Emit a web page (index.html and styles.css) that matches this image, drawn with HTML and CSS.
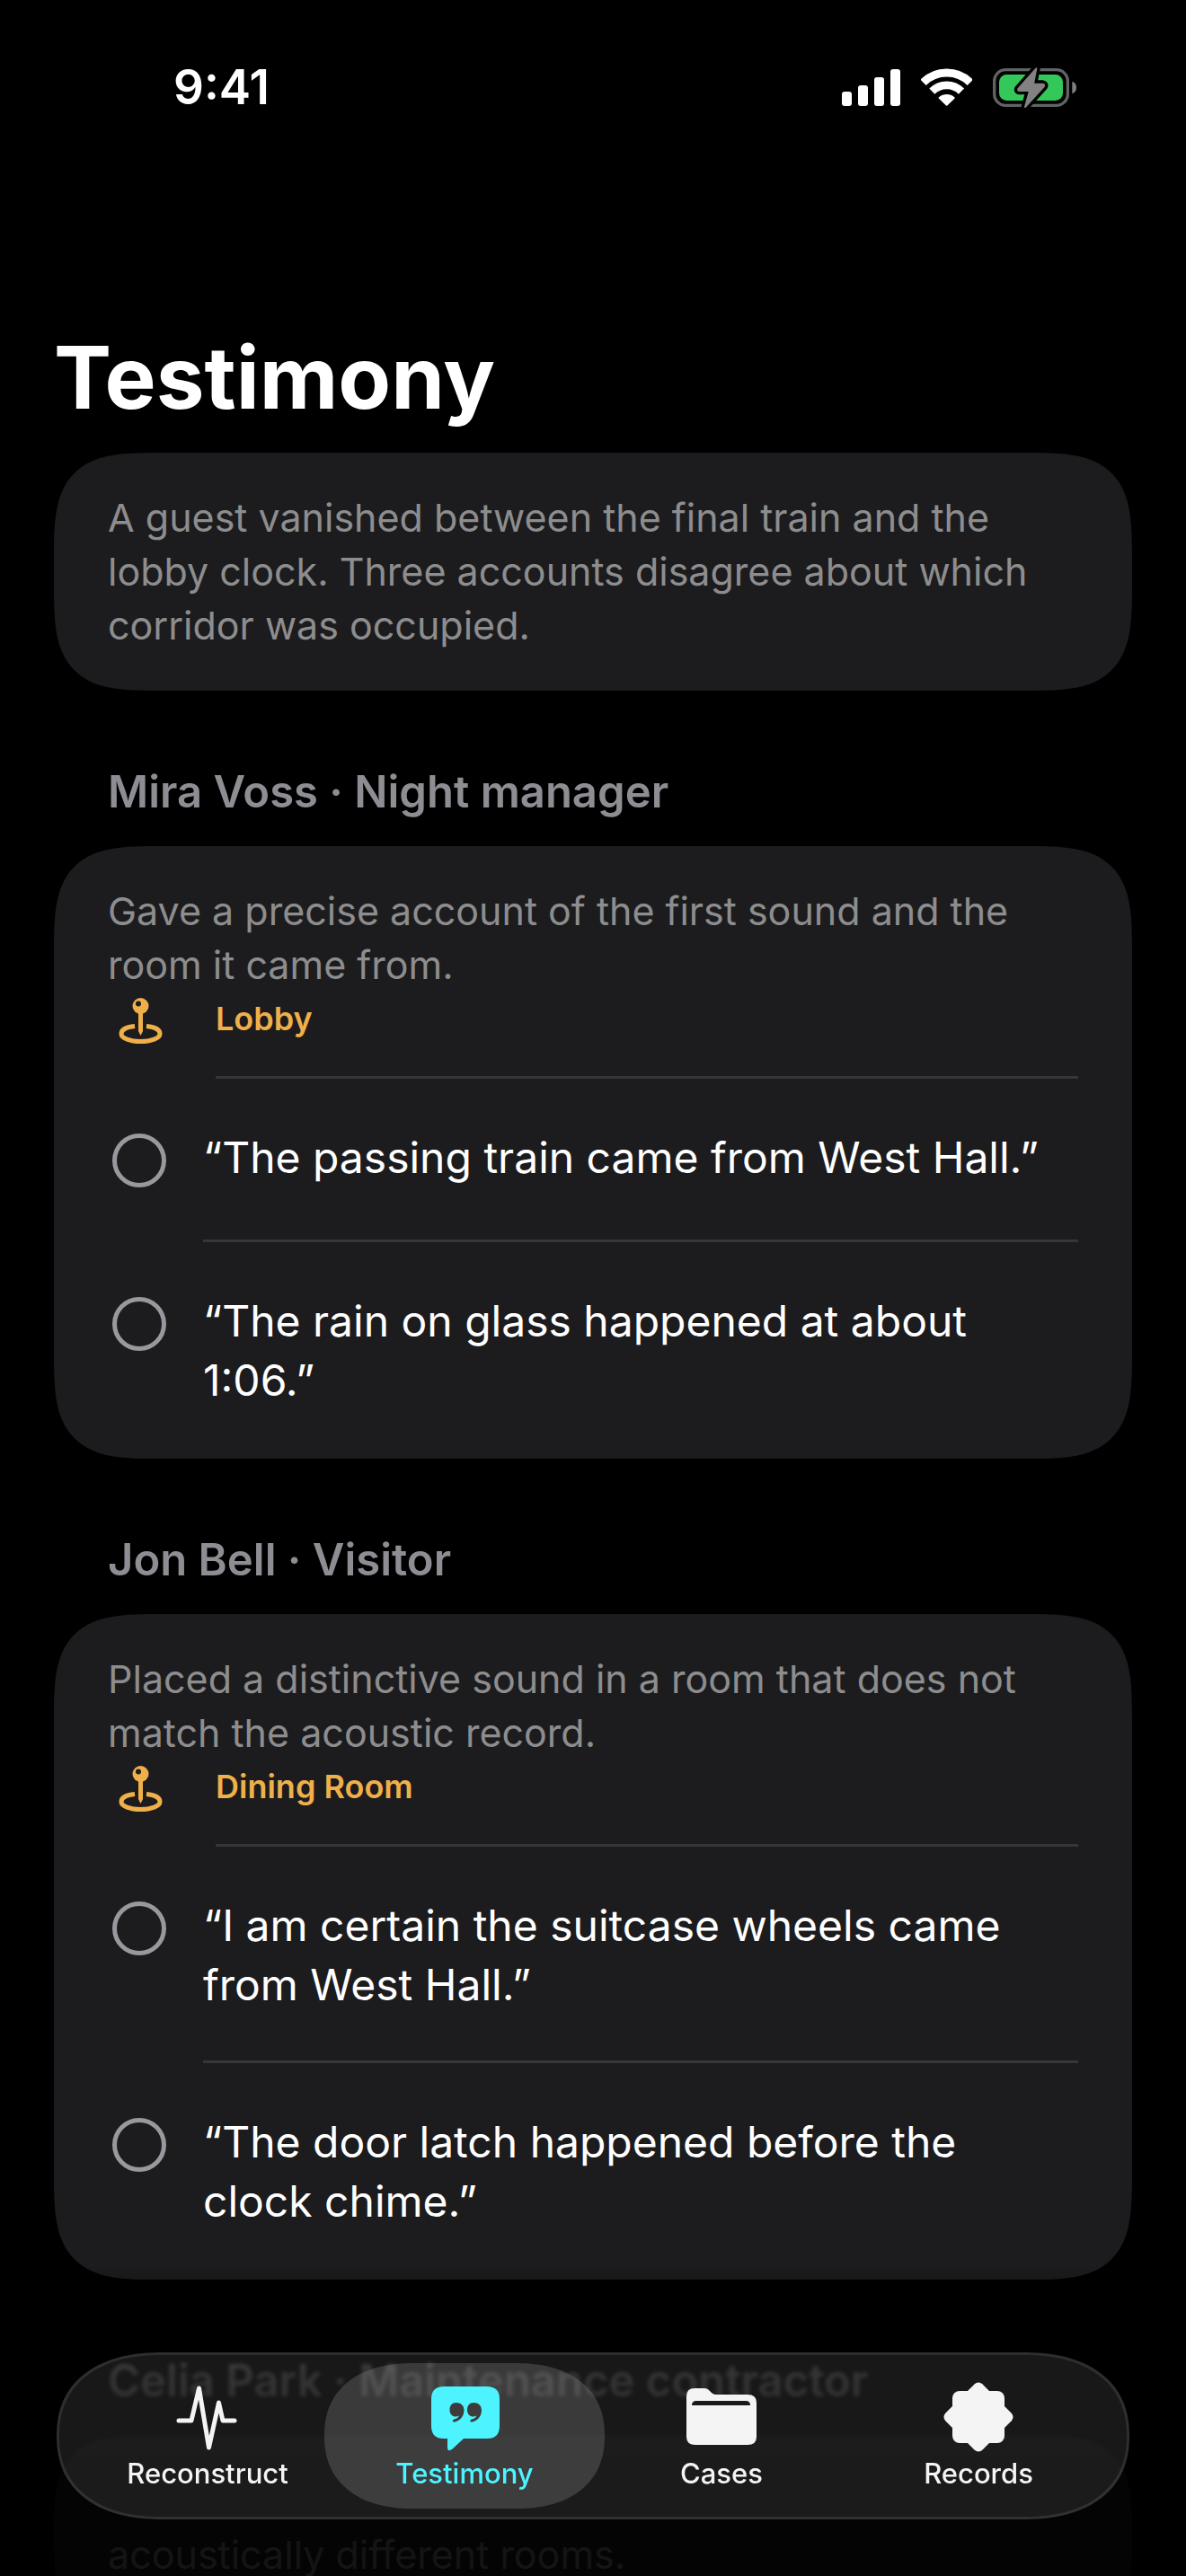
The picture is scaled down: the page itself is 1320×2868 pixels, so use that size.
FILE: index.html
```html
<!DOCTYPE html>
<html lang="en">
<head>
  <meta charset="UTF-8">
  <meta name="viewport" content="width=device-width, initial-scale=1.0">
  <title>Testimony</title>
  <link rel="stylesheet" href="styles.css">
</head>
<body>
  <div class="screen">
    <header class="status-bar">
      <span class="time">9:41</span>
      <div class="status-icons">
        <svg width="65" height="42" viewBox="111 75 195 126" fill="#fff" aria-hidden="true">
          <rect x="111" y="153" width="33" height="48" rx="9"/>
          <rect x="165" y="132" width="33" height="69" rx="9"/>
          <rect x="219" y="105" width="33" height="96" rx="9"/>
          <rect x="273" y="78" width="33" height="123" rx="9"/>
        </svg>
        <svg width="57" height="42" viewBox="374 75 171 126" fill="none" stroke="#fff" aria-hidden="true">
          <path d="M381.5 122.5A111 111 0 0 1 538.5 122.5" stroke-width="27"/>
          <path d="M411 152A69 69 0 0 1 509 152" stroke-width="26"/>
          <path d="M460 197L436 174A36 36 0 0 1 484 174Z" fill="#fff" stroke-width="6" stroke-linejoin="round"/>
        </svg>
        <svg width="94" height="45" viewBox="615 72 282 135" aria-hidden="true">
          <rect x="620" y="80" width="245" height="119" rx="38" fill="none" stroke="#636363" stroke-width="10"/>
          <rect x="636" y="96" width="213" height="87" rx="25" fill="#34c759"/>
          <path d="M880 119Q894 124 894 139.500T880 160Z" fill="#808080"/>
          <path d="M760 76L700 144Q698 150 704 150H738L723 204L786 135Q788 129 782 128H750Z" fill="#000" stroke="#000" stroke-width="26" stroke-linejoin="round"/>
          <path d="M760 76L700 144Q698 150 704 150H738L723 204L786 135Q788 129 782 128H750Z" fill="#828282" stroke="#828282" stroke-width="6" stroke-linejoin="round"/>
        </svg>
      </div>
    </header>

    <main>
      <h1>Testimony</h1>

      <section class="card summary">
        <p class="note">A guest vanished between the final train and the lobby clock. Three accounts disagree about which corridor was occupied.</p>
      </section>

      <h2>Mira Voss · Night manager</h2>
      <section class="card">
        <div class="witness">
          <p class="note">Gave a precise account of the first sound and the room it came from.</p>
          <div class="place">
            <svg class="pin" viewBox="0 0 72 60" aria-hidden="true">
              <path d="M30 34.500C20 35.500 15 39 15 43C15 48 25 51.500 36.500 51.500S58 48 58 43C58 39 53 35.500 43 34.500" transform="translate(0 4)" fill="none" stroke="#efb04a" stroke-width="5"/>
              <path d="M34 22H39V44L36.500 49L34 44Z" fill="#efb04a"/>
              <circle cx="36.500" cy="16" r="9" fill="#efb04a"/>
              <circle cx="34" cy="13.500" r="3" fill="#1c1c1e"/>
            </svg>
            <span class="place-name">Lobby</span>
          </div>
        </div>
        <label class="claim">
          <input type="checkbox">
          <span class="claim-text">“The passing train came from West Hall.”</span>
        </label>
        <label class="claim">
          <input type="checkbox">
          <span class="claim-text">“The rain on glass happened at about 1:06.”</span>
        </label>
      </section>

      <h2>Jon Bell · Visitor</h2>
      <section class="card">
        <div class="witness">
          <p class="note">Placed a distinctive sound in a room that does not match the acoustic record.</p>
          <div class="place">
            <svg class="pin" viewBox="0 0 72 60" aria-hidden="true">
              <path d="M30 34.500C20 35.500 15 39 15 43C15 48 25 51.500 36.500 51.500S58 48 58 43C58 39 53 35.500 43 34.500" transform="translate(0 4)" fill="none" stroke="#efb04a" stroke-width="5"/>
              <path d="M34 22H39V44L36.500 49L34 44Z" fill="#efb04a"/>
              <circle cx="36.500" cy="16" r="9" fill="#efb04a"/>
              <circle cx="34" cy="13.500" r="3" fill="#1c1c1e"/>
            </svg>
            <span class="place-name">Dining Room</span>
          </div>
        </div>
        <label class="claim">
          <input type="checkbox">
          <span class="claim-text">“I am certain the suitcase wheels came from West Hall.”</span>
        </label>
        <label class="claim">
          <input type="checkbox">
          <span class="claim-text">“The door latch happened before the clock chime.”</span>
        </label>
      </section>

      <h2>Celia Park · Maintenance contractor</h2>
      <section class="card next">
        <p class="note">acoustically different rooms.</p>
      </section>
    </main>

    <div class="edge-fade"></div>

    <nav class="tab-bar">
      <a class="tab" href="#reconstruct">
        <svg width="84" height="78" viewBox="0 0 84 78" aria-hidden="true">
          <path d="M10 43H24L32.500 7L43.500 73L54.500 23L59 43H72" fill="none" stroke="currentColor" stroke-width="5" stroke-linecap="round" stroke-linejoin="round"/>
        </svg>
        <span>Reconstruct</span>
      </a>
      <a class="tab active" href="#testimony">
        <svg width="84" height="78" viewBox="0 0 84 78" aria-hidden="true">
          <path d="M19 5H67Q81 5 81 19V49Q81 63 67 63H41L28 75Q23 78 23 73V63H19Q5 63 5 49V19Q5 5 19 5Z" fill="currentColor"/>
          <g fill="#3c3c3c">
            <path d="M33 23C28 23 25.500 26.500 25.500 31C25.500 36 29 39 33 38.500L36 37.500C35 40 33 41 30.500 41.500C28 42.500 28.500 45 31 44.500C38 43 41.500 37 41.500 31.500C41.500 26.500 38 23 33 23Z"/>
            <path d="M52.500 23C47.500 23 45 26.500 45 31C45 36 48.500 39 52.500 38.500L55.500 37.500C54.500 40 52.500 41 50 41.500C47.500 42.500 48 45 50.500 44.500C57.500 43 61 37 61 31.500C61 26.500 57.500 23 52.500 23Z"/>
          </g>
        </svg>
        <span>Testimony</span>
      </a>
      <a class="tab" href="#cases">
        <svg width="84" height="78" viewBox="0 0 84 78" aria-hidden="true">
          <path d="M12 7H23Q26 7 28 9L31 12Q33 14 36 14H71Q81 14 81 23V61Q81 70 71 70H13Q3 70 3 61V16Q3 7 12 7Z" fill="currentColor"/>
          <path d="M9 26Q9 21 14 21H69Q74 21 74 26Z" fill="#1a1a1a"/>
        </svg>
        <span>Cases</span>
      </a>
      <a class="tab" href="#records">
        <svg width="84" height="78" viewBox="0 0 84 78" aria-hidden="true">
          <g fill="currentColor" transform="translate(42 39)">
            <rect x="-29" y="-29" width="58" height="58" rx="8"/>
            <rect x="-29" y="-29" width="58" height="58" rx="6" transform="rotate(45)"/>
          </g>
        </svg>
        <span>Records</span>
      </a>
    </nav>
  </div>
</body>
</html>
```
FILE: styles.css
```css
* {
  box-sizing: border-box;
}
body {
  margin: 0;
  background: #000;
  color: #fff;
  font-family: Inter, "Liberation Sans", sans-serif;
}
.screen {
  position: relative;
  height: 100vh;
  overflow: hidden;
}

/* status bar */
.status-bar {
  display: flex;
  align-items: center;
  justify-content: space-between;
  height: 194px;
  padding: 0 121px 0 193px;
}
.time {
  font-size: 53px;
  font-weight: 600;
  line-height: 60px;
}
.status-icons {
  display: flex;
  align-items: center;
  gap: 23px;
}

/* content */
main {
  padding: 166px 60px 0;
}
h1 {
  margin: 0 0 24px;
  font-size: 96px;
  font-weight: 700;
  line-height: 120px;
}
h2 {
  margin: 80px 0 0;
  padding: 0 60px 27px;
  color: #8d8d93;
  font-size: 49px;
  font-weight: 600;
  line-height: 66px;
}
.card {
  background: #1c1c1e;
  border-radius: 84px;
}
.summary {
  padding: 42px 60px 43px;
}
.note {
  margin: 0;
  color: #8d8d8e;
  font-size: 43px;
  line-height: 60px;
}
.witness {
  padding: 42px 60px 0;
}
.place {
  display: flex;
  gap: 48px;
}
.pin {
  width: 72px;
  height: 60px;
}
.place-name {
  flex: 1;
  padding-bottom: 34px;
  border-bottom: 3px solid #363638;
  color: #efb04a;
  font-size: 36px;
  font-weight: 600;
  line-height: 60px;
}
.claim {
  display: flex;
  align-items: flex-start;
  gap: 41px;
  padding: 0 60px 0 65px;
}
.claim input {
  appearance: none;
  flex: none;
  width: 60px;
  height: 60px;
  margin: 61px 0 0;
  border: 5px solid #98989e;
  border-radius: 50%;
}
.claim input:checked {
  background: #4df4ff;
}
.claim-text {
  flex: 1;
  min-height: 182px;
  padding: 55px 24px 51px 0;
  border-bottom: 3px solid #363638;
  font-size: 48px;
  line-height: 66px;
}
.claim:last-child .claim-text {
  border-color: transparent;
}
.next {
  padding: 103px 60px 60px;
}

/* tab bar floating over the list */
.edge-fade {
  position: absolute;
  right: 0;
  bottom: 0;
  left: 0;
  height: 348px;
  background: linear-gradient(transparent, rgba(0, 0, 0, 0.77) 120px, rgba(0, 0, 0, 0.86) 240px);
}
.tab-bar {
  position: absolute;
  right: 63px;
  bottom: 63px;
  left: 63px;
  display: flex;
  padding: 9px 22px;
  border: 3px solid rgba(255, 255, 255, 0.18);
  border-radius: 93px;
  background: rgba(255, 255, 255, 0.095);
  background-clip: padding-box;
  backdrop-filter: blur(2px);
}
.tab {
  position: relative;
  flex: 1;
  display: flex;
  flex-direction: column;
  align-items: center;
  gap: 6px;
  height: 162px;
  padding-top: 21px;
  color: #f4f4f4;
  font-size: 31px;
  font-weight: 500;
  line-height: 36px;
  text-decoration: none;
}
.tab svg,
.tab span {
  position: relative;
}
.tab.active {
  color: #4df4ff;
}
.tab.active::before {
  content: "";
  position: absolute;
  inset: 0 -13px;
  border-radius: 81px;
  background: rgba(255, 255, 255, 0.15);
}

/* continuous corners where the browser has them */
@supports (corner-shape: superellipse(2)) {
  .card {
    border-radius: 119px;
    corner-shape: superellipse(1.7);
  }
  .tab-bar {
    border-radius: 118px / 93px;
    corner-shape: superellipse(1.2);
  }
  .tab.active::before {
    border-radius: 100px / 81px;
    corner-shape: superellipse(1.2);
  }
}
```
